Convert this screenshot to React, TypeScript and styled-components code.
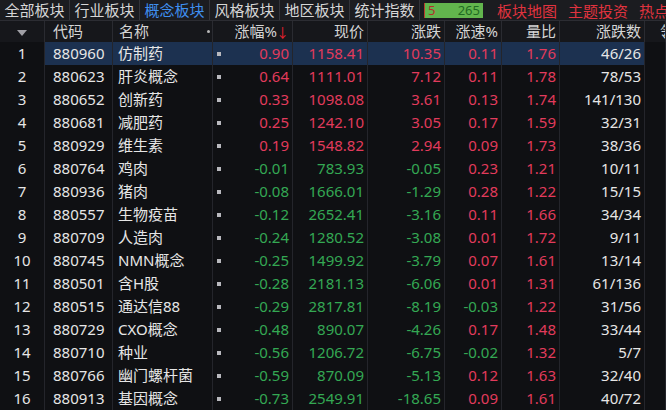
import React from 'react'
import styled, { createGlobalStyle } from 'styled-components'

const GlobalStyle = createGlobalStyle`
  html, body {
    margin: 0;
    padding: 0;
    background: #0f1013;
    overflow: hidden;
  }
  body {
    font-family: 'Noto Sans', 'Noto Sans CJK SC', sans-serif;
  }
`

const UP = '#e23b5c'
const DOWN = '#34a853'
const COLS = '45px 68px 100px 80px 75px 77px 57px 58px 85px 1fr'

const Page = styled.div`
  width: 666px;
  height: 410px;
  overflow: hidden;
  background: #0f1013;
  font-size: 15px;
`

const TabBar = styled.div`
  display: flex;
  align-items: center;
  height: 20px;
  background: #1b1c20;
  border-bottom: 1px solid #2c2d33;
  white-space: nowrap;
`

const Tab = styled.div<{ $active?: boolean }>`
  width: 69px;
  height: 20px;
  line-height: 20px;
  text-align: center;
  border-right: 1px solid #34353b;
  color: ${p => (p.$active ? '#3f8ff0' : '#d6d6d6')};
  flex-shrink: 0;
`

const Counter = styled.div`
  display: flex;
  justify-content: space-between;
  align-items: center;
  width: 52px;
  height: 15px;
  margin-left: 4px;
  padding: 0 3px 0 3px;
  background: #62b54d;
  border-left: 1px solid #b83a2e;
  font-size: 13px;
  line-height: 15px;
  flex-shrink: 0;

  span:first-child {
    color: #b2302a;
  }
  span:last-child {
    color: #1f6a22;
  }
`

const LinkTab = styled.div`
  color: #e0333f;
  margin-left: 14px;
  flex-shrink: 0;

  & + & {
    margin-left: 11px;
  }
`

const Row = styled.div<{ $header?: boolean }>`
  display: grid;
  grid-template-columns: ${COLS};
  height: ${p => (p.$header ? '21px' : '23px')};
  line-height: ${p => (p.$header ? '21px' : '23px')};
  background: ${p => (p.$header ? '#16171b' : 'transparent')};
  white-space: nowrap;
`

const Cell = styled.div<{
  $align?: 'left' | 'right' | 'center'
  $color?: string
  $selected?: boolean
}>`
  position: relative;
  overflow: hidden;
  padding: ${p => (p.$align === 'right' ? '0 3px 0 0' : p.$align === 'center' ? '0' : '0 0 0 6px')};
  text-align: ${p => p.$align || 'left'};
  color: ${p => p.$color || '#e6e6e6'};
  border-right: 1px solid #24252b;
  background: ${p => (p.$selected ? '#1c3150' : 'transparent')};
`

const HeadCell = styled(Cell)`
  color: #d4d4d4;
  border-right-color: #2a2b31;
`

const Caret = styled.span`
  display: inline-block;
  width: 0;
  height: 0;
  border-left: 5px solid transparent;
  border-right: 5px solid transparent;
  border-top: 6px solid #a0a0a6;
  vertical-align: middle;
`

const SortArrow = styled.span`
  color: #e8202e;
  font-size: 13px;
  margin-left: -1px;
`

const HeadDot = styled.span`
  position: absolute;
  right: 2px;
  top: 9px;
  width: 3px;
  height: 3px;
  border-radius: 50%;
  background: #b8b8b8;
`

const Marker = styled.span`
  position: absolute;
  left: 4px;
  top: 10px;
  width: 4px;
  height: 4px;
  background: #b9b9be;
`

interface Block {
  code: string
  name: string
  pct: number
  price: string
  change: string
  speed: number
  ratio: string
  counts: string
}

const blocks: Block[] = [
  { code: '880960', name: '仿制药', pct: 0.9, price: '1158.41', change: '10.35', speed: 0.11, ratio: '1.76', counts: '46/26' },
  { code: '880623', name: '肝炎概念', pct: 0.64, price: '1111.01', change: '7.12', speed: 0.11, ratio: '1.78', counts: '78/53' },
  { code: '880652', name: '创新药', pct: 0.33, price: '1098.08', change: '3.61', speed: 0.13, ratio: '1.74', counts: '141/130' },
  { code: '880681', name: '减肥药', pct: 0.25, price: '1242.10', change: '3.05', speed: 0.17, ratio: '1.59', counts: '32/31' },
  { code: '880929', name: '维生素', pct: 0.19, price: '1548.82', change: '2.94', speed: 0.09, ratio: '1.73', counts: '38/36' },
  { code: '880764', name: '鸡肉', pct: -0.01, price: '783.93', change: '-0.05', speed: 0.23, ratio: '1.21', counts: '10/11' },
  { code: '880936', name: '猪肉', pct: -0.08, price: '1666.01', change: '-1.29', speed: 0.28, ratio: '1.22', counts: '15/15' },
  { code: '880557', name: '生物疫苗', pct: -0.12, price: '2652.41', change: '-3.16', speed: 0.11, ratio: '1.66', counts: '34/34' },
  { code: '880709', name: '人造肉', pct: -0.24, price: '1280.52', change: '-3.08', speed: 0.01, ratio: '1.72', counts: '9/11' },
  { code: '880745', name: 'NMN概念', pct: -0.25, price: '1499.92', change: '-3.79', speed: 0.07, ratio: '1.61', counts: '13/14' },
  { code: '880501', name: '含H股', pct: -0.28, price: '2181.13', change: '-6.06', speed: 0.01, ratio: '1.31', counts: '61/136' },
  { code: '880515', name: '通达信88', pct: -0.29, price: '2817.81', change: '-8.19', speed: -0.03, ratio: '1.22', counts: '31/56' },
  { code: '880729', name: 'CXO概念', pct: -0.48, price: '890.07', change: '-4.26', speed: 0.17, ratio: '1.48', counts: '33/44' },
  { code: '880710', name: '种业', pct: -0.56, price: '1206.72', change: '-6.75', speed: -0.02, ratio: '1.32', counts: '5/7' },
  { code: '880766', name: '幽门螺杆菌', pct: -0.59, price: '870.09', change: '-5.13', speed: 0.12, ratio: '1.63', counts: '32/40' },
  { code: '880913', name: '基因概念', pct: -0.73, price: '2549.91', change: '-18.65', speed: 0.09, ratio: '1.61', counts: '40/72' },
]

const tone = (v: number) => (v >= 0 ? UP : DOWN)

const tabs = ['全部板块', '行业板块', '概念板块', '风格板块', '地区板块', '统计指数']

const App: React.FC = () => (
  <Page>
    <GlobalStyle />
    <TabBar>
      {tabs.map(t => (
        <Tab key={t} $active={t === '概念板块'}>
          {t}
        </Tab>
      ))}
      <Counter>
        <span>5</span>
        <span>265</span>
      </Counter>
      <LinkTab>板块地图</LinkTab>
      <LinkTab>主题投资</LinkTab>
      <LinkTab>热点专题</LinkTab>
    </TabBar>

    <Row $header>
      <HeadCell $align="center">
        <Caret />
      </HeadCell>
      <HeadCell style={{ paddingLeft: 8 }}>代码</HeadCell>
      <HeadCell>
        名称
        <HeadDot />
      </HeadCell>
      <HeadCell $align="right">
        涨幅%<SortArrow>↓</SortArrow>
      </HeadCell>
      <HeadCell $align="right">现价</HeadCell>
      <HeadCell $align="right">涨跌</HeadCell>
      <HeadCell $align="right">涨速%</HeadCell>
      <HeadCell $align="right">量比</HeadCell>
      <HeadCell $align="right">涨跌数</HeadCell>
      <HeadCell style={{ paddingLeft: 15 }}>领涨股</HeadCell>
    </Row>

    {blocks.map((b, i) => {
      const sel = i === 0
      return (
        <Row key={b.code}>
          <Cell $align="center">{i + 1}</Cell>
          <Cell $selected={sel} style={{ paddingLeft: 8 }}>
            {b.code}
          </Cell>
          <Cell $selected={sel} style={{ paddingLeft: 5 }}>
            {b.name}
          </Cell>
          <Cell $selected={sel} $align="right" $color={tone(b.pct)}>
            <Marker />
            {b.pct.toFixed(2)}
          </Cell>
          <Cell $selected={sel} $align="right" $color={tone(b.pct)}>
            {b.price}
          </Cell>
          <Cell $selected={sel} $align="right" $color={tone(b.pct)}>
            {b.change}
          </Cell>
          <Cell $selected={sel} $align="right" $color={tone(b.speed)}>
            {b.speed.toFixed(2)}
          </Cell>
          <Cell $selected={sel} $align="right" $color={UP}>
            {b.ratio}
          </Cell>
          <Cell $selected={sel} $align="right">
            {b.counts}
          </Cell>
          <Cell />
        </Row>
      )
    })}
  </Page>
)

export default App
